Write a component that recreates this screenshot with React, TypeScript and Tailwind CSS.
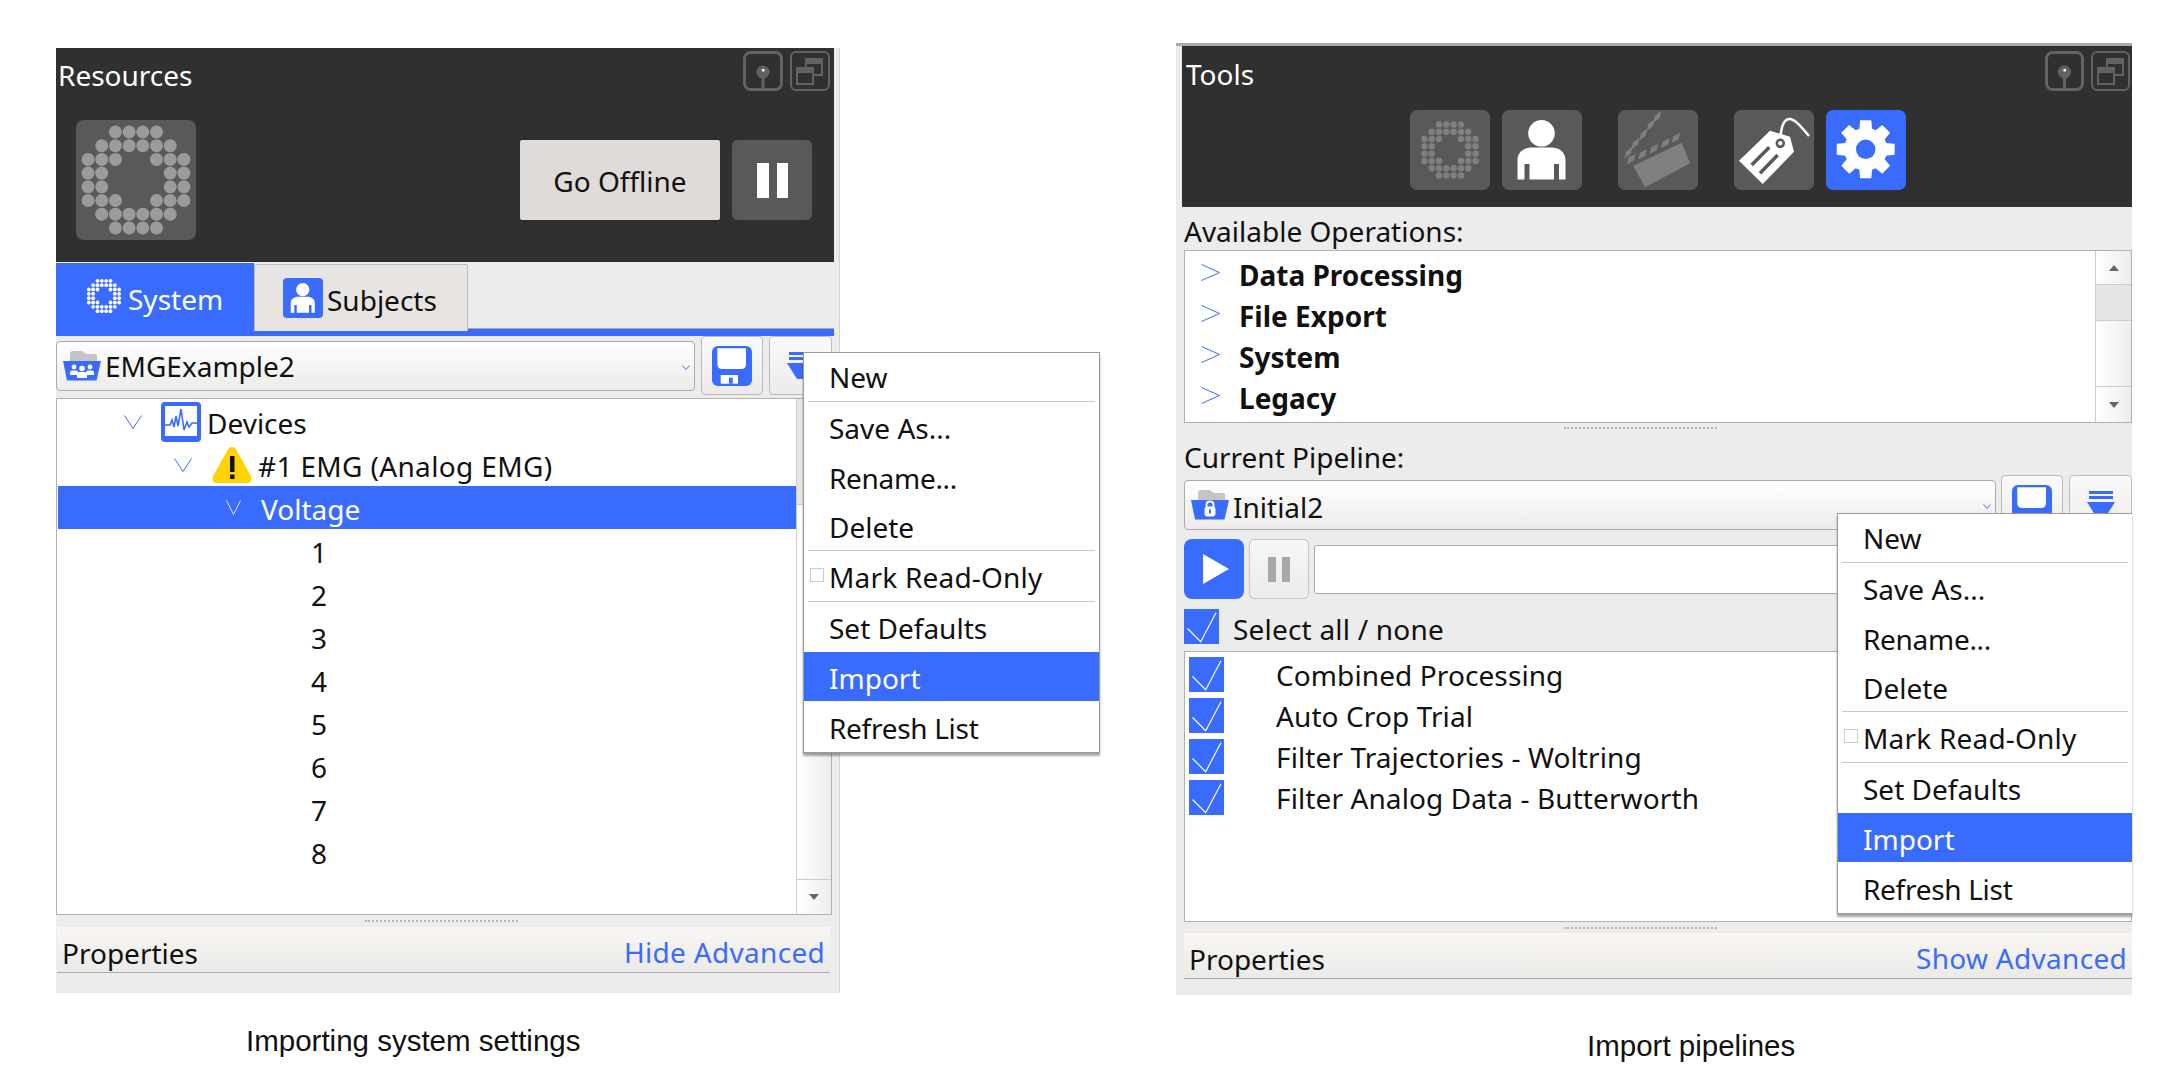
import type { ReactNode } from "react";

const dotRows = [
  [2, 3, 4, 5],
  [1, 2, 3, 4, 5, 6],
  [0, 1, 2, 5, 6, 7],
  [0, 1, 6, 7],
  [0, 1, 6, 7],
  [0, 1, 2, 5, 6, 7],
  [1, 2, 3, 4, 5, 6],
  [2, 3, 4, 5],
];

function Dots({ size, color, r = 6.5 }: { size: number; color: string; r?: number }) {
  return (
    <svg width={size} height={size} viewBox="0 0 120 120">
      {dotRows.map((row, y) =>
        row.map((x) => <circle key={`${x}-${y}`} cx={12 + 13.7 * x} cy={12 + 13.7 * y} r={r} fill={color} />)
      )}
    </svg>
  );
}

function ChevronDown({ w = 18, h = 14, color = "#3a6bff" }: { w?: number; h?: number; color?: string }) {
  return (
    <svg width={w} height={h} viewBox={`0 0 ${w} ${h}`} className="shrink-0">
      <polyline points={`0.5,0.5 ${w / 2},${h - 0.5} ${w - 0.5},0.5`} fill="none" stroke={color} strokeWidth="1" />
    </svg>
  );
}

function ChevronRight() {
  return (
    <svg width="19" height="17" viewBox="0 0 19 17" className="shrink-0 -mt-[4px]">
      <polyline points="0.5,0.5 18.5,8.5 0.5,16.5" fill="none" stroke="#3a6bff" strokeWidth="1" />
    </svg>
  );
}

function Check() {
  return (
    <div className="w-[35px] h-[35px] bg-[#3a6bff] shrink-0">
      <svg width="35" height="35" viewBox="0 0 35 35">
        <polyline points="3.5,19.5 16.7,32.7 32,3.7" fill="none" stroke="#fff" strokeWidth="1.2" />
      </svg>
    </div>
  );
}

function PinButtons({ width }: { width: number }) {
  return (
    <div className="flex gap-[7px]">
      <svg width={width} height="40" viewBox={`0 0 ${width} 40`}>
        <rect x="1.5" y="1.5" width={width - 3} height="37" rx="6" fill="none" stroke="#62625e" strokeWidth="3" />
        <circle cx={width / 2} cy="21" r="6.5" fill="#62625e" />
        <rect x={width / 2 - 1.5} y="24" width="3" height="14" fill="#62625e" />
        <rect x={width / 2 - 1} y="18" width="2.5" height="2.5" fill="#fff" />
      </svg>
      <svg width={width} height="40" viewBox={`0 0 ${width} 40`}>
        <rect x="1" y="1" width={width - 2} height="38" rx="5" fill="none" stroke="#62625e" strokeWidth="2" />
        <rect x="16" y="8" width="16" height="16" fill="none" stroke="#62625e" strokeWidth="2" />
        <rect x="16" y="8" width="16" height="5" fill="#62625e" />
        <rect x="7" y="17" width="16" height="16" fill="#303030" stroke="#62625e" strokeWidth="2" />
        <rect x="7" y="17" width="16" height="5" fill="#62625e" />
      </svg>
    </div>
  );
}

function PersonGlyph({ size }: { size: number }) {
  return (
    <svg width={size} height={size} viewBox="0 0 80 80">
      <circle cx="39.5" cy="23.3" r="13.3" fill="#fff" />
      <path
        d="M15.5 69.5V50C15.5 42 22 37.5 30 37.5H49C57 37.5 63.5 42 63.5 50V69.5H57V54H52V69.5H27.5V54H22.5V69.5Z"
        fill="#fff"
      />
    </svg>
  );
}

function ClapperGlyph() {
  const low = [[12.7, 49.3], [24, 44.5], [35.5, 39], [47, 33.3], [57.5, 28]];
  const up = [[10.3, 42.7], [17.5, 33.5], [25.3, 24.5], [32.7, 15], [39.3, 6.7]];
  return (
    <svg width="80" height="80" viewBox="0 0 80 80">
      <polygon points="15.3,55.7 63.7,32.7 72,53.3 27,77.3" fill="#808080" />
      {low.map(([x, y]) => (
        <polygon key={x} points={`${x - 4},${y + 5} ${x + 3},${y + 1.5} ${x + 5},${y - 5} ${x - 2},${y - 2}`} fill="#808080" />
      ))}
      {up.map(([x, y]) => (
        <polygon key={x} points={`${x - 4},${y + 6} ${x - 2.5},${y - 1} ${x + 4},${y - 6} ${x + 2.5},${y + 1}`} fill="#808080" />
      ))}
    </svg>
  );
}

function TagGlyph() {
  return (
    <svg width="80" height="80" viewBox="0 0 80 80">
      <path d="M46.3 30C47 16 50 9.5 55 9C60 8.5 65 14 75 26" fill="none" stroke="#fff" strokeWidth="2.5" />
      <polygon points="5,50.7 28.7,74 60,41.7 56,26.7 36,20.7" fill="#fff" />
      <circle cx="46.3" cy="33.3" r="3.5" fill="none" stroke="#595959" strokeWidth="2.5" />
      <line x1="17.7" y1="55" x2="35.3" y2="37.3" stroke="#595959" strokeWidth="3.5" />
      <line x1="26" y1="63.3" x2="43.7" y2="45" stroke="#595959" strokeWidth="3.5" />
    </svg>
  );
}

function GearGlyph() {
  let d = "";
  for (let i = 0; i < 8; i++) {
    const a = (i * Math.PI) / 4 - Math.PI / 2;
    const pts = [
      [21.5, a - 0.3],
      [29.5, a - 0.19],
      [29.5, a + 0.19],
      [21.5, a + 0.3],
    ];
    pts.forEach(([r, t], j) => {
      d += `${i === 0 && j === 0 ? "M" : "L"}${(39.7 + r * Math.cos(t)).toFixed(2)} ${(39.3 + r * Math.sin(t)).toFixed(2)}`;
    });
  }
  return (
    <svg width="80" height="80" viewBox="0 0 80 80">
      <path d={d + "Z"} fill="#fff" />
      <circle cx="39.7" cy="39.3" r="9.7" fill="#3a6bff" />
    </svg>
  );
}

function FolderIcon({ kind }: { kind: "people" | "lock" }) {
  return (
    <svg width="38" height="30" viewBox="0 0 38 30" className="shrink-0">
      <path d="M7 11V3Q7 0 10 0H19L23 3H32Q34 3 34 5V11Z" fill="#c4c4c4" />
      <path d="M0 10H38L33.5 29.5H4Z" fill="#3a6bff" />
      {kind === "people" ? (
        <g fill="#fff">
          <circle cx="11" cy="16" r="2.4" />
          <path d="M7 24V21.5Q7 19.5 9 19.5H13Q15 19.5 15 21.5V24Z" />
          <circle cx="27" cy="16" r="2.4" />
          <path d="M23 24V21.5Q23 19.5 25 19.5H29Q31 19.5 31 21.5V24Z" />
          <circle cx="19" cy="17.5" r="2.8" />
          <path d="M14 27V23.5Q14 21 16.5 21H21.5Q24 21 24 23.5V27Z" />
        </g>
      ) : (
        <g>
          <path d="M15.5 17V15Q15.5 11.5 19 11.5Q22.5 11.5 22.5 15V17" fill="none" stroke="#fff" strokeWidth="1.8" />
          <rect x="13.5" y="16.5" width="11" height="10" rx="3" fill="#fff" />
          <rect x="18" y="19.5" width="2" height="4" fill="#3a6bff" />
        </g>
      )}
    </svg>
  );
}

function SaveIcon() {
  return (
    <svg width="40" height="40" viewBox="0 0 40 40">
      <rect width="40" height="40" rx="6" fill="#3a6bff" />
      <path d="M5.3 2.3H34V18Q34 23 29 23H10.3Q5.3 23 5.3 18Z" fill="#fff" />
      <rect x="8.7" y="29" width="17.3" height="8.7" fill="#fff" />
      <rect x="17" y="31.7" width="3.7" height="6" fill="#3a6bff" />
    </svg>
  );
}

function FilterIcon() {
  return (
    <svg width="28" height="27" viewBox="0 0 28 27">
      <rect x="2" y="0" width="24" height="3" fill="#3a6bff" />
      <rect x="2" y="5" width="24" height="3" fill="#3a6bff" />
      <polygon points="0,11 28,11 18,27 10,27" fill="#3a6bff" />
    </svg>
  );
}

function DevicesIcon() {
  return (
    <svg width="40" height="40" viewBox="0 0 40 40" className="shrink-0">
      <rect width="40" height="40" rx="4" fill="#3a6bff" />
      <rect x="4" y="4" width="32" height="30" fill="#fff" />
      <polyline
        points="4,23 9,23 11,18 13,25 15,14 17,24 20,7 23,28 26,20 28,25 31,21 36,21"
        fill="none"
        stroke="#3a6bff"
        strokeWidth="1.6"
      />
    </svg>
  );
}

function WarningIcon() {
  return (
    <svg width="40" height="36" viewBox="0 0 40 36" className="shrink-0">
      <path d="M20 0Q23 0 25 4L39 29Q41 36 35 36H5Q-1 36 1 29L15 4Q17 0 20 0Z" fill="#ffd200" />
      <rect x="18" y="9" width="4.5" height="16" fill="#111" />
      <rect x="18" y="27.5" width="4.5" height="4.5" fill="#111" />
    </svg>
  );
}

function ScrollArrow({ up }: { up?: boolean }) {
  return (
    <svg width="10" height="6" viewBox="0 0 10 6">
      <polygon points={up ? "5,0 10,6 0,6" : "0,0 10,0 5,6"} fill="#666" />
    </svg>
  );
}

function Splitter({ h, ml }: { h: string; ml: string }) {
  return (
    <div className={`${h} flex items-center`}>
      <div className={`${ml} w-[153px] border-t-2 border-dotted border-[#b4b4b4]`} />
    </div>
  );
}

function Dropdown({ icon, label, width, textClass }: { icon: ReactNode; label: string; width: string; textClass: string }) {
  return (
    <div className={`${width} h-[50px] mt-[5px] flex items-center pl-[6px] pr-[4px] gap-[4px] rounded-[4px] border border-[#aaa] bg-gradient-to-b from-white to-[#ecebe9]`}>
      {icon}
      <span className={textClass}>{label}</span>
      <div className="ml-auto mt-[2px]">
        <ChevronDown w={8} h={5} />
      </div>
    </div>
  );
}

function ToolButton({ width, children }: { width: string; children: ReactNode }) {
  return (
    <div className={`${width} h-[59px] flex items-center justify-center rounded-[4px] border border-[#bbb] bg-gradient-to-b from-[#fbfafa] to-[#eceaea]`}>
      {children}
    </div>
  );
}

function Tile({ bg = "bg-[#595959]", children }: { bg?: string; children: ReactNode }) {
  return <div className={`${bg} w-[80px] h-[80px] rounded-[7px] flex items-center justify-center`}>{children}</div>;
}

function Properties({ link, width }: { link: string; width: string }) {
  return (
    <div className={`${width} h-[46px] flex items-center justify-between px-[5px] border-b border-[#aaa] bg-gradient-to-b from-[#f9f6f3] to-[#ebeae8]`}>
      <span className="mt-[7px]">Properties</span>
      <span className="text-[#3a6bff] mt-[5px] tracking-[0.3px]">{link}</span>
    </div>
  );
}

function MenuSep() {
  return <div className="h-px mx-[4px] bg-[#c8c8c8]" />;
}

function ContextMenu({ className }: { className: string }) {
  return (
    <div className={`${className} absolute z-20 bg-white border border-[#9a9a9a] shadow-[0_3px_2px_rgba(0,0,0,0.35)]`}>
      <div className="h-[48px] pl-[25px] flex items-center">New</div>
      <MenuSep />
      <div className="h-[50px] pl-[25px] pt-[2px] flex items-center">Save As...</div>
      <div className="h-[49px] pl-[25px] pt-[2px] flex items-center tracking-[-0.3px]">Rename...</div>
      <div className="h-[49px] pl-[25px] pt-[2px] flex items-center">Delete</div>
      <MenuSep />
      <div className="h-[50px] flex items-center pt-[2px] tracking-[0.2px]">
        <div className="w-[14px] h-[14px] ml-[6px] mr-[5px] -mt-[4px] border border-[#ccc]" />
        Mark Read-Only
      </div>
      <MenuSep />
      <div className="h-[50px] pl-[25px] pt-[2px] flex items-center">Set Defaults</div>
      <div className="h-[49px] pl-[25px] pt-[2px] flex items-center bg-[#3a6bff] text-white">Import</div>
      <div className="h-px" />
      <div className="h-[50px] pl-[25px] pt-[2px] flex items-center tracking-[-0.3px]">Refresh List</div>
    </div>
  );
}

function ResourcesPanel() {
  return (
    <div className="relative w-[784px] h-[945px] flex flex-col bg-[#ececec] border-r border-[#d4d4d4]">
      {/* Header */}
      <div className="w-[778px] h-[214px] shrink-0 bg-[#303030]">
        <div className="h-[72px] flex justify-between pt-[3px] pr-[4px]">
          <span className="text-white pl-[2px] pt-[10px] h-[40px]">Resources</span>
          <PinButtons width={40} />
        </div>
        <div className="flex items-center pl-[20px] pr-[22px]">
          <div className="w-[120px] h-[120px] rounded-[8px] bg-[#595959]">
            <Dots size={120} color="#9b9b9b" />
          </div>
          <div className="ml-auto w-[200px] h-[80px] pt-[2px] flex items-center justify-center bg-[#dedbd8] text-[#111] rounded-[2px]">Go Offline</div>
          <div className="ml-[12px] w-[80px] h-[80px] rounded-[5px] bg-[#595959] flex items-center justify-center gap-[8px]">
            <div className="w-[12px] h-[35px] bg-white" />
            <div className="w-[11px] h-[35px] bg-white" />
          </div>
        </div>
      </div>

      {/* Tabs */}
      <div className="w-[778px] h-[66px] mt-[1px] shrink-0 flex items-start">
        <div className="w-[198px] h-[66px] bg-[#3a6bff] flex items-center pl-[29px] gap-[5px] text-white">
          <Dots size={38} color="#fff" r={6} />
          <span className="mt-[5px]">System</span>
        </div>
        <div className="relative z-10 w-[214px] h-[67px] mt-[1px] flex items-center pl-[28px] gap-[4px] border border-[#bbb] border-b-0 rounded-t-[2px] bg-gradient-to-b from-[#e9e5e2] to-[#e6e3e0]">
          <div className="w-[40px] h-[40px] rounded-[4px] bg-[#3a6bff]">
            <PersonGlyph size={40} />
          </div>
          <span className="text-[#111] mt-[3px]">Subjects</span>
        </div>
        <div className="flex-1 h-[66px] border-b border-[#aaa]" />
      </div>
      <div className="w-[778px] h-[7px] shrink-0 bg-[#3a6bff]" />

      {/* Selector */}
      <div className="h-[62px] shrink-0 flex items-start gap-[6px]">
        <Dropdown width="w-[639px]" label="EMGExample2" textClass="" icon={<FolderIcon kind="people" />} />
        <ToolButton width="w-[62px]">
          <SaveIcon />
        </ToolButton>
        <ToolButton width="w-[63px]">
          <FilterIcon />
        </ToolButton>
      </div>

      {/* Tree */}
      <div className="w-[776px] h-[517px] shrink-0 flex border border-[#b0b0b0] bg-white">
        <div className="w-[739px] pt-px">
          <div className="h-[43px] flex items-center pl-[67px]">
            <ChevronDown />
            <div className="ml-[19px] mr-[6px]">
              <DevicesIcon />
            </div>
            <span className="mt-[3px]">Devices</span>
          </div>
          <div className="h-[43px] flex items-center pl-[117px]">
            <ChevronDown />
            <div className="ml-[20px] mr-[6px]">
              <WarningIcon />
            </div>
            <span className="mt-[3px] tracking-[0.35px]">#1 EMG (Analog EMG)</span>
          </div>
          <div className="h-[43px] flex items-center pl-[168px] ml-px bg-[#3a6bff] text-white">
            <ChevronDown w={15} h={15} color="#dfe7ff" />
            <span className="ml-[20px] mt-[3px]">Voltage</span>
          </div>
          {["1", "2", "3", "4", "5", "6", "7", "8"].map((n) => (
            <div key={n} className="h-[43px] flex items-center pl-[254px] pt-[3px]">
              {n}
            </div>
          ))}
        </div>
        <div className="flex-1 flex flex-col border-l border-[#ccc] bg-gradient-to-r from-white to-[#efedeb]">
          <div className="h-[106px] border-b border-[#ccc] bg-[#e8e6e4]" />
          <div className="flex-1" />
          <div className="h-[35px] border-t border-[#ccc] flex items-center justify-center">
            <ScrollArrow />
          </div>
        </div>
      </div>

      <Splitter h="h-[12px]" ml="ml-[309px]" />
      <Properties link="Hide Advanced" width="w-[773px] ml-px" />

      <ContextMenu className="left-[747px] top-[304px] w-[297px]" />
    </div>
  );
}

function ToolsPanel() {
  return (
    <div className="relative w-[956px] h-[952px] flex flex-col bg-[#ececec] border-t-[3px] border-[#aaa]">
      {/* Header */}
      <div className="ml-[6px] h-[161px] shrink-0 bg-[#303030]">
        <div className="h-[64px] flex justify-between pt-[5px] pr-[2px]">
          <span className="text-white pl-[4px] pt-[9px] h-[40px]">Tools</span>
          <PinButtons width={39} />
        </div>
        <div className="flex ml-[228px]">
          <Tile>
            <Dots size={64} color="#808080" r={6} />
          </Tile>
          <div className="ml-[12px]">
            <Tile>
              <PersonGlyph size={80} />
            </Tile>
          </div>
          <div className="ml-[36px]">
            <Tile>
              <ClapperGlyph />
            </Tile>
          </div>
          <div className="ml-[36px]">
            <Tile>
              <TagGlyph />
            </Tile>
          </div>
          <div className="ml-[12px]">
            <Tile bg="bg-[#3a6bff]">
              <GearGlyph />
            </Tile>
          </div>
        </div>
      </div>

      <div className="h-[43px] shrink-0 flex items-center pl-[8px] pt-[5px]">Available Operations:</div>

      {/* Operations */}
      <div className="ml-[8px] w-[948px] h-[173px] shrink-0 flex border border-[#b0b0b0] bg-white">
        <div className="flex-1 pt-[3px] font-bold">
          {["Data Processing", "File Export", "System", "Legacy"].map((op) => (
            <div key={op} className="h-[41px] flex items-center pl-[16px] gap-[19px]">
              <ChevronRight />
              <span>{op}</span>
            </div>
          ))}
        </div>
        <div className="w-[36px] flex flex-col border-l border-[#ccc] bg-gradient-to-r from-white to-[#efedeb]">
          <div className="h-[34px] border-b border-[#ccc] flex items-center justify-center">
            <ScrollArrow up />
          </div>
          <div className="h-[36px] border-b border-[#ccc] bg-[#e8e6e4]" />
          <div className="flex-1" />
          <div className="h-[36px] border-t border-[#ccc] flex items-center justify-center">
            <ScrollArrow />
          </div>
        </div>
      </div>

      <Splitter h="h-[10px]" ml="ml-[388px]" />
      <div className="h-[42px] shrink-0 flex items-center pl-[8px] pt-[5px]">Current Pipeline:</div>

      {/* Pipeline selector */}
      <div className="ml-[8px] h-[64px] shrink-0 flex items-start gap-[5px]">
        <Dropdown width="w-[812px]" label="Initial2" textClass="mt-[3px]" icon={<FolderIcon kind="lock" />} />
        <ToolButton width="w-[62px]">
          <SaveIcon />
        </ToolButton>
        <div className="ml-px">
          <ToolButton width="w-[63px]">
            <FilterIcon />
          </ToolButton>
        </div>
      </div>

      {/* Run controls */}
      <div className="ml-[8px] h-[60px] shrink-0 flex items-center gap-[5px]">
        <div className="w-[60px] h-[60px] pl-[4px] rounded-[8px] bg-[#3a6bff] flex items-center justify-center">
          <svg width="26" height="30" viewBox="0 0 26 30">
            <polygon points="0,0 26,15 0,30" fill="#fff" />
          </svg>
        </div>
        <div className="w-[60px] h-[60px] rounded-[5px] border border-[#c4c4c4] bg-gradient-to-b from-[#f8f7f6] to-[#eceaea] flex items-center justify-center gap-[6px]">
          <div className="w-[8px] h-[25px] bg-[#a8a8a8]" />
          <div className="w-[8px] h-[25px] bg-[#a8a8a8]" />
        </div>
        <div className="flex-1 h-[49px] rounded-[3px] border border-[#aaa] bg-white" />
      </div>

      <div className="ml-[8px] mt-[10px] h-[35px] shrink-0 flex items-center gap-[14px]">
        <Check />
        <span className="mt-[5px] tracking-[0.2px]">Select all / none</span>
      </div>

      {/* Pipeline steps */}
      <div className="ml-[8px] mt-[7px] w-[948px] h-[271px] shrink-0 pt-[2px] pl-[4px] border border-[#b0b0b0] bg-white">
        {["Combined Processing", "Auto Crop Trial", "Filter Trajectories - Woltring", "Filter Analog Data - Butterworth"].map((step) => (
          <div key={step} className="h-[41px] flex items-center gap-[52px]">
            <Check />
            <span className="tracking-[0.1px]">{step}</span>
          </div>
        ))}
      </div>

      <Splitter h="h-[11px]" ml="ml-[388px]" />
      <div className="ml-[8px]">
        <Properties link="Show Advanced" width="w-[948px]" />
      </div>

      <ContextMenu className="left-[661px] top-[467px] w-[295px] border-r-0" />
    </div>
  );
}

export default function App() {
  return (
    <div className="w-[2183px] h-[1090px] overflow-hidden bg-white flex font-['Noto_Sans',sans-serif] text-[28px] text-[#111] leading-none">
      <div className="ml-[56px] mt-[48px] w-[784px]">
        <ResourcesPanel />
        <div className="ml-[190px] mt-[33px] font-['Liberation_Sans',sans-serif] text-[29.5px] whitespace-nowrap">Importing system settings</div>
      </div>
      <div className="ml-[336px] mt-[43px] w-[956px]">
        <ToolsPanel />
        <div className="ml-[411px] mt-[36px] font-['Liberation_Sans',sans-serif] text-[29.5px] whitespace-nowrap">Import pipelines</div>
      </div>
    </div>
  );
}
